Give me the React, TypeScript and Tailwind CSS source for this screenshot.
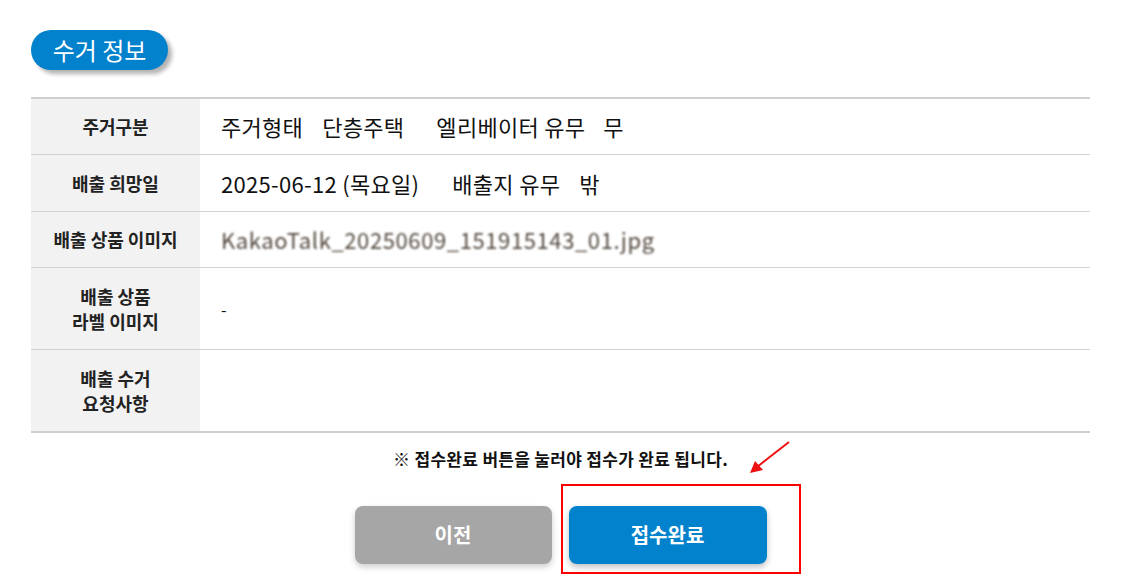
import React from "react";

const font = { fontFamily: '"Noto Sans CJK KR", "Noto Sans", sans-serif' };

function Label({ children }: { children: React.ReactNode }) {
  return (
    <div className="w-[169px] shrink-0 bg-[#f2f2f2] flex items-center justify-center text-center text-[18px] font-bold leading-[25px] text-[#222]">
      {children}
    </div>
  );
}

function Row({ label, children, h }: { label: React.ReactNode; children?: React.ReactNode; h: string }) {
  return (
    <div className={`flex border-b border-[#d2d2d2] ${h}`}>
      <Label>{label}</Label>
      <div className="flex-1 flex items-center pl-[21px] text-[22px] tracking-[0.3px] text-[#111] whitespace-pre">{children}</div>
    </div>
  );
}

export default function App() {
  return (
    <div className="w-[1147px] h-[585px] bg-white overflow-hidden" style={font}>
      <div className="w-[1059px] ml-[31px] pt-[30px]">
        <div className="w-[137px] h-[40px] rounded-full bg-[#0281cc] text-white text-[24px] flex items-center justify-center shadow-[4px_4px_4px_rgba(0,0,0,0.3)]">
          수거 정보
        </div>
        <div className="mt-[27px] border-t-2 border-[#cfcfcf]">
          <Row label="주거구분" h="h-[56px]">
            <span>주거형태</span>
            <span className="ml-[19px]">단층주택</span>
            <span className="ml-[32px]">엘리베이터 유무</span>
            <span className="ml-[18px]">무</span>
          </Row>
          <Row label="배출 희망일" h="h-[57px]">
            <span>2025-06-12 (목요일)</span>
            <span className="ml-[33px]">배출지 유무</span>
            <span className="ml-[19px]">밖</span>
          </Row>
          <Row label="배출 상품 이미지" h="h-[56px]">
            <span className="text-[#54493f] blur-[0.8px] tracking-[0.6px]">KakaoTalk_20250609_151915143_01.jpg</span>
          </Row>
          <Row label={<>배출 상품<br />라벨 이미지</>} h="h-[82px]">
            <span className="text-[16px]">-</span>
          </Row>
          <div className="flex h-[83px] border-b-2 border-[#cfcfcf]">
            <Label>
              배출 수거<br />요청사항
            </Label>
            <div className="flex-1" />
          </div>
        </div>
        <div className="relative pt-[14px]">
          <p className="text-center text-[17px] tracking-[0.3px] font-semibold text-[#111] leading-[24px]">
            ※ 접수완료 버튼을 눌러야 접수가 완료 됩니다.
          </p>
          <svg className="absolute left-[716px] top-[7px]" width="46" height="36" viewBox="0 0 46 36">
            <line x1="42" y1="2" x2="10" y2="27" stroke="#e11" strokeWidth="2" />
            <polygon points="3,33 8,21 16,30" fill="#e11" />
          </svg>
          <div className="flex justify-center gap-[17px] mt-[35px]">
            <button className="w-[197px] h-[58px] rounded-[8px] bg-[#a6a6a6] text-white text-[20px] font-bold shadow-[0_3px_6px_rgba(0,0,0,0.2)]">
              이전
            </button>
            <div className="relative">
              <button className="w-[198px] h-[58px] rounded-[8px] bg-[#0281cc] text-white text-[20px] font-bold shadow-[0_3px_6px_rgba(0,0,0,0.25)]">
                접수완료
              </button>
              <div className="absolute left-[-8px] top-[-22px] w-[240px] h-[90px] border-2 border-[#f00]" />
            </div>
          </div>
        </div>
      </div>
    </div>
  );
}
